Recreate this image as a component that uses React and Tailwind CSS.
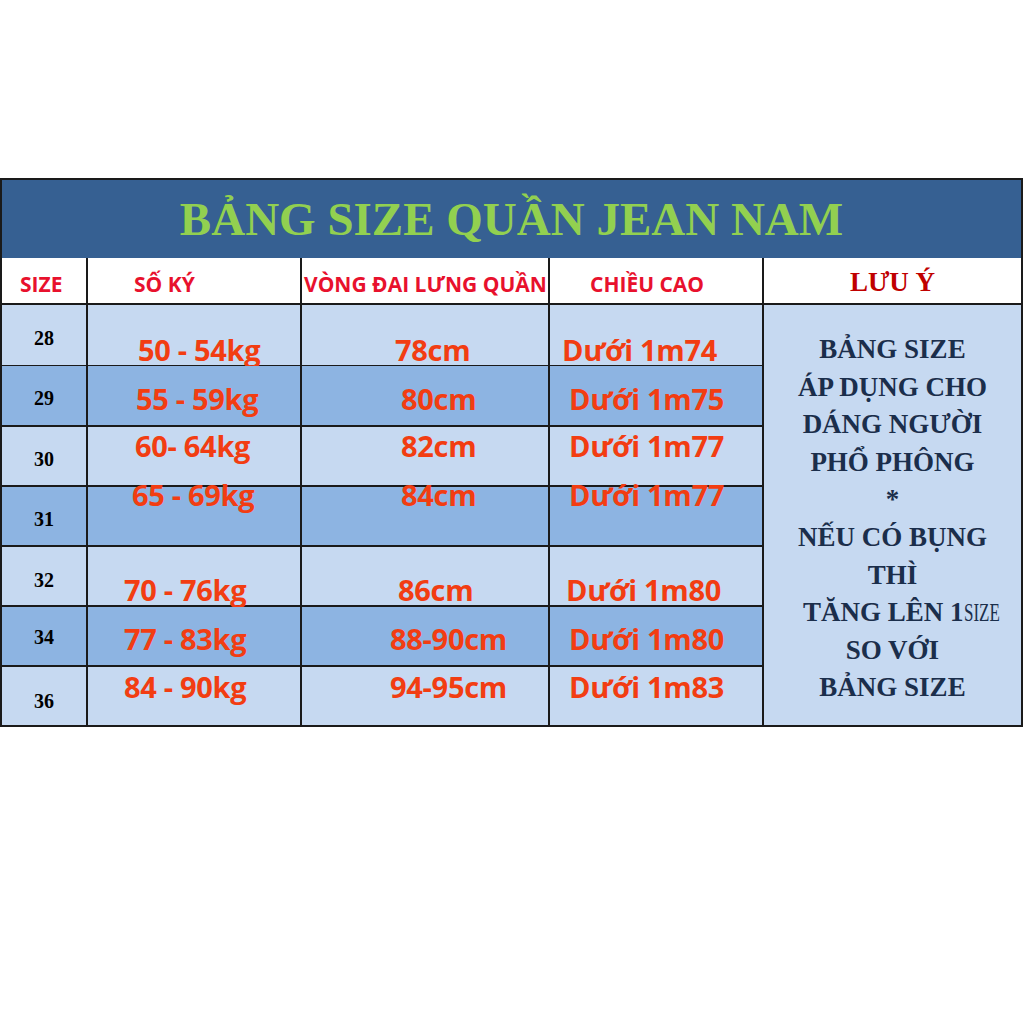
const rows = [
  { size: "28", kg: "50 - 54kg", cm: "78cm", hgt: "Dưới 1m74", h: "h-[61px]", bg: "bg-[#c6d9f1]", sizePt: "pt-[23px]", pos: "pt-[30px]", kgPl: "pl-[50px]", cmPl: "pl-[93px]", hPl: "pl-[12px]" },
  { size: "29", kg: "55 - 59kg", cm: "80cm", hgt: "Dưới 1m75", h: "h-[61px]", bg: "bg-[#8db4e2]", sizePt: "pt-[22px]", pos: "pt-[18px]", kgPl: "pl-[48px]", cmPl: "pl-[99px]", hPl: "pl-[19px]" },
  { size: "30", kg: "60- 64kg", cm: "82cm", hgt: "Dưới 1m77", h: "h-[60px]", bg: "bg-[#c6d9f1]", sizePt: "pt-[22px]", pos: "pt-[4px]", kgPl: "pl-[47px]", cmPl: "pl-[99px]", hPl: "pl-[19px]" },
  { size: "31", kg: "65 - 69kg", cm: "84cm", hgt: "Dưới 1m77", h: "h-[60px]", bg: "bg-[#8db4e2]", sizePt: "pt-[22px]", pos: "-mt-[7px]", kgPl: "pl-[44px]", cmPl: "pl-[99px]", hPl: "pl-[19px]" },
  { size: "32", kg: "70 - 76kg", cm: "86cm", hgt: "Dưới 1m80", h: "h-[60px]", bg: "bg-[#c6d9f1]", sizePt: "pt-[23px]", pos: "pt-[28px]", kgPl: "pl-[36px]", cmPl: "pl-[96px]", hPl: "pl-[16px]" },
  { size: "34", kg: "77 - 83kg", cm: "88-90cm", hgt: "Dưới 1m80", h: "h-[60px]", bg: "bg-[#8db4e2]", sizePt: "pt-[20px]", pos: "pt-[17px]", kgPl: "pl-[36px]", cmPl: "pl-[88px]", hPl: "pl-[19px]" },
  { size: "36", kg: "84 - 90kg", cm: "94-95cm", hgt: "Dưới 1m83", h: "h-[60px]", bg: "bg-[#c6d9f1]", sizePt: "pt-[24px]", pos: "pt-[5px]", kgPl: "pl-[36px]", cmPl: "pl-[88px]", hPl: "pl-[19px]" },
];

const notes = ["BẢNG SIZE", "ÁP DỤNG CHO", "DÁNG NGƯỜI", "PHỔ PHÔNG", "*", "NẾU CÓ BỤNG", "THÌ"];

const sans = "font-['Open_Sans','Liberation_Sans',sans-serif]";
const serif = "font-['Liberation_Serif','Times_New_Roman',serif]";

function DataText({ text, pos, pl }) {
  return (
    <div
      className={`${pos} ${pl} ${sans} whitespace-nowrap text-[29px] font-bold leading-[30px] tracking-[-0.3px] text-[#f23d12]`}
    >
      {text}
    </div>
  );
}

export default function App() {
  return (
    <div className="h-[1024px] w-[1024px] overflow-hidden bg-white pt-[178px]">
      <div className="w-[1023px] border-x-2 border-t-2 border-[#1a1a1a]">
        <div className="flex h-[78px] items-center justify-center bg-[#366092]">
          <span className={`${serif} text-[47px] font-bold leading-none text-[#92d050]`}>
            BẢNG SIZE QUẦN JEAN NAM
          </span>
        </div>

        <div className={`grid h-[47px] grid-cols-[86px_214px_248px_214px_257px] bg-white ${sans} text-[21px] font-bold leading-[24px] text-[#e8112d]`}>
          <div className="border-b-2 border-r-2 border-[#1a1a1a] pl-[18px] pt-[14px]">SIZE</div>
          <div className="border-b-2 border-r-2 border-[#1a1a1a] pl-[46px] pt-[14px]">SỐ KÝ</div>
          <div className="whitespace-nowrap border-b-2 border-r-2 border-[#1a1a1a] pl-[2px] pt-[14px]">
            VÒNG ĐAI LƯNG QUẦN
          </div>
          <div className="border-b-2 border-r-2 border-[#1a1a1a] pl-[40px] pt-[14px]">CHIỀU CAO</div>
          <div className={`border-b-2 border-[#1a1a1a] pt-[10px] text-center ${serif} text-[27px] leading-[28px] text-[#c00000]`}>
            LƯU Ý
          </div>
        </div>

        <div className="flex">
          <div className="flex w-[762px] flex-col">
            {rows.map((r) => (
              <div key={r.size} className={`grid grid-cols-[86px_214px_248px_214px] ${r.h} ${r.bg}`}>
                <div className={`border-b-2 border-r-2 border-[#1a1a1a] ${r.sizePt} text-center ${serif} text-[20px] font-bold leading-[20px] text-black`}>
                  {r.size}
                </div>
                <div className="border-b-2 border-r-2 border-[#1a1a1a]">
                  <DataText text={r.kg} pos={r.pos} pl={r.kgPl} />
                </div>
                <div className="border-b-2 border-r-2 border-[#1a1a1a]">
                  <DataText text={r.cm} pos={r.pos} pl={r.cmPl} />
                </div>
                <div className="border-b-2 border-r-2 border-[#1a1a1a]">
                  <DataText text={r.hgt} pos={r.pos} pl={r.hPl} />
                </div>
              </div>
            ))}
          </div>

          <div className={`w-[257px] border-b-2 border-[#1a1a1a] bg-[#c6d9f1] pt-[26px] ${serif} text-[27px] font-bold leading-[37.6px] text-[#1b2e4b]`}>
            {notes.map((n) => (
              <div key={n} className="text-center whitespace-nowrap">
                {n}
              </div>
            ))}
            <div className="whitespace-nowrap pl-[39px]">
              TĂNG LÊN 1
              <span className="inline-block origin-left scale-x-[0.68] text-[25px] font-normal">SIZE</span>
            </div>
            <div className="text-center whitespace-nowrap">SO VỚI</div>
            <div className="text-center whitespace-nowrap">BẢNG SIZE</div>
          </div>
        </div>
      </div>
    </div>
  );
}
